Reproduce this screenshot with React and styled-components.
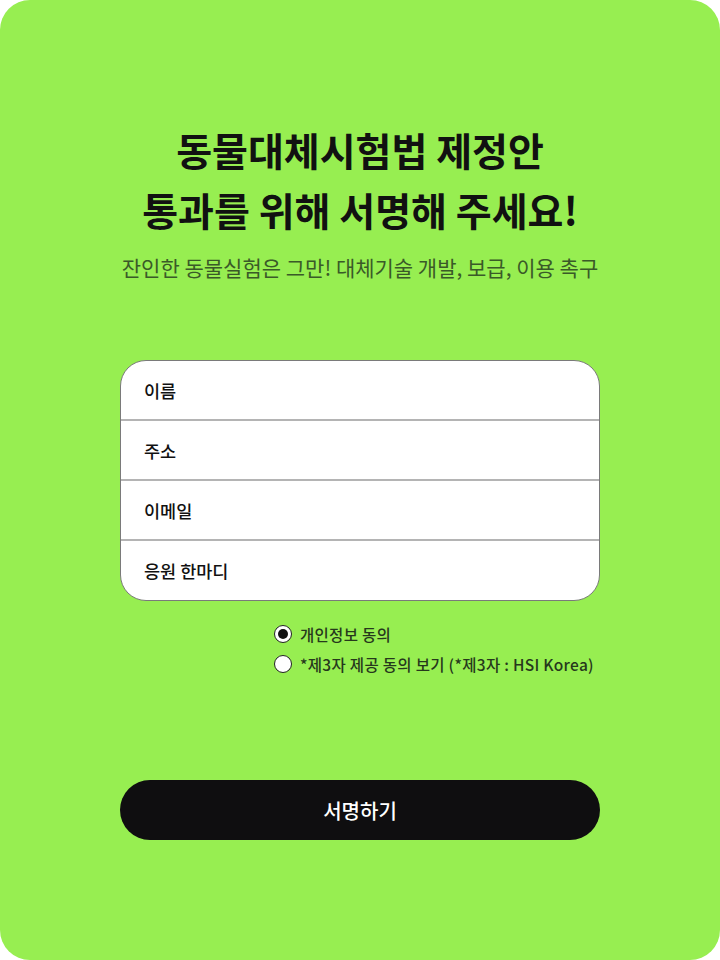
import React from "react";
import styled, { createGlobalStyle } from "styled-components";

const Global = createGlobalStyle`
  html, body { margin: 0; padding: 0; background: #ffffff; }
  body { font-family: "Noto Sans CJK KR", "Noto Sans", sans-serif; }
  * { box-sizing: border-box; }
`;

const Card = styled.main`
  width: 720px;
  height: 960px;
  background: #97ee51;
  border-radius: 30px;
  display: flex;
  flex-direction: column;
  align-items: center;
  padding-top: 119px;
`;

const Title = styled.h1`
  margin: 0;
  font-size: 39px;
  line-height: 60px;
  font-weight: 700;
  color: #111111;
  text-align: center;
`;

const Subtitle = styled.p`
  margin: 13px 0 0;
  font-size: 21px;
  line-height: 30px;
  font-weight: 400;
  color: #3a5a28;
  text-align: center;
`;

const Form = styled.div`
  margin-top: 78px;
  width: 480px;
  background: #ffffff;
  border: 1px solid #7a7a7a;
  border-radius: 26px;
  overflow: hidden;
  display: flex;
  flex-direction: column;
`;

const Field = styled.div`
  height: ${p => (p.$last ? 59 : 60)}px;
  display: flex;
  align-items: center;
  padding-left: 23px;
  font-size: 17.5px;
  font-weight: 500;
  color: #111111;
  border-bottom: ${p => (p.$last ? "none" : "2px solid #b4b4b4")};
`;

const Consents = styled.div`
  margin-top: 23px;
  width: 480px;
  display: flex;
  flex-direction: column;
  gap: 10px;
  padding-left: 154px;
`;

const ConsentRow = styled.label`
  display: flex;
  align-items: center;
  gap: 8px;
  height: 20px;
  font-size: 15.5px;
  line-height: 20px;
  letter-spacing: 0.3px;
  font-weight: 500;
  color: #26381c;
`;

const Radio = styled.span`
  width: 18px;
  height: 18px;
  border-radius: 50%;
  background: #ffffff;
  border: 1.5px solid #222222;
  display: flex;
  align-items: center;
  justify-content: center;
  flex: none;
  &::after {
    content: "";
    width: 10px;
    height: 10px;
    border-radius: 50%;
    background: ${p => (p.$checked ? "#111111" : "transparent")};
  }
`;

const Button = styled.button`
  margin-top: 106px;
  width: 480px;
  height: 60px;
  border: none;
  border-radius: 30px;
  background: #0f0e10;
  color: #ffffff;
  font-family: inherit;
  font-size: 20px;
  font-weight: 500;
  cursor: pointer;
`;

export default function App() {
  return (
    <>
      <Global />
      <Card>
        <Title>
          동물대체시험법 제정안
          <br />
          통과를 위해 서명해 주세요!
        </Title>
        <Subtitle>잔인한 동물실험은 그만! 대체기술 개발, 보급, 이용 촉구</Subtitle>
        <Form>
          <Field>이름</Field>
          <Field>주소</Field>
          <Field>이메일</Field>
          <Field $last>응원 한마디</Field>
        </Form>
        <Consents>
          <ConsentRow>
            <Radio $checked />
            개인정보 동의
          </ConsentRow>
          <ConsentRow>
            <Radio />
            *제3자 제공 동의 보기 (*제3자 : HSI Korea)
          </ConsentRow>
        </Consents>
        <Button>서명하기</Button>
      </Card>
    </>
  );
}
